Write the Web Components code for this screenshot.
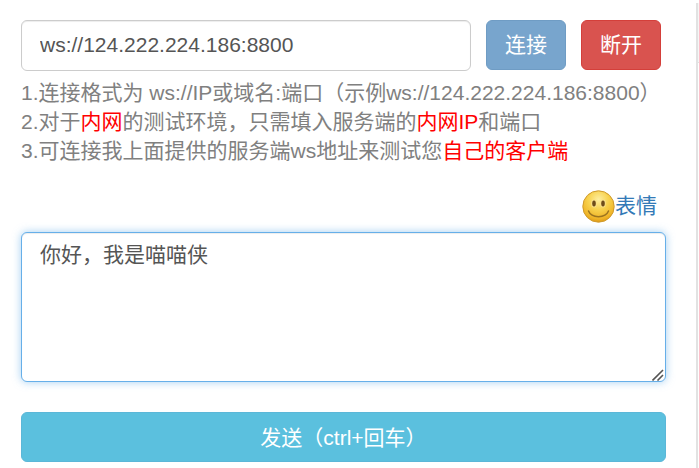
<!DOCTYPE html>
<html lang="zh">
<head>
<meta charset="utf-8">
<style>
  html, body { margin: 0; padding: 0; background: #fff; height: 100%; overflow: hidden; }
  body { font-family: "Liberation Sans", "Noto Sans CJK SC", sans-serif; }
  connect-tips b { font-weight: normal; color: #f00; }
</style>
</head>
<body>
<chat-panel>
  <connect-bar value="ws://124.222.224.186:8800"></connect-bar>
  <connect-tips>
    <div>1.连接格式为 ws://IP或域名:端口（示例ws://124.222.224.186:8800）</div>
    <div>2.对于<b>内网</b>的测试环境，只需填入服务端的<b>内网IP</b>和端口</div>
    <div>3.可连接我上面提供的服务端ws地址来测试您<b>自己的客户端</b></div>
  </connect-tips>
  <emoji-link>表情</emoji-link>
  <message-box value="你好，我是喵喵侠"></message-box>
  <send-button>发送（ctrl+回车）</send-button>
</chat-panel>

<script>
const FONT = '"Liberation Sans", "Noto Sans CJK SC", sans-serif';

class ChatPanel extends HTMLElement {
  constructor() {
    super();
    this.attachShadow({ mode: 'open' }).innerHTML = `
      <style>
        :host {
          display: flex;
          box-sizing: border-box;
          width: 699px;
          height: 468px;
          padding-left: 21px;
        }
        .main { width: 645px; padding-top: 20px; }
        /* edge of the next panel, cut off by the window */
        .rail {
          box-sizing: border-box;
          width: 3px;
          margin: 3px 0 0 30px;
          border-left: 2px solid #e2e2e2;
          background: linear-gradient(#f6f6f6 59px, #e2e2e2 59px, #e2e2e2 60px, #fff 60px);
        }
      </style>
      <div class="main"><slot></slot></div>
      <div class="rail"></div>`;
  }
}

class ConnectBar extends HTMLElement {
  constructor() {
    super();
    this.attachShadow({ mode: 'open' }).innerHTML = `
      <style>
        :host { display: flex; align-items: flex-start; }
        input {
          box-sizing: border-box;
          width: 450px;
          height: 51px;
          padding: 0 18px 1px;
          border: 1px solid #ccc;
          border-radius: 6px;
          font: 21px ${FONT};
          color: #555;
          outline: none;
          box-shadow: inset 0 1px 1px rgba(0,0,0,.075);
        }
        button {
          box-sizing: border-box;
          width: 80px;
          height: 50px;
          margin-left: 15px;
          padding: 0 0 4px;
          border-radius: 6px;
          color: #fff;
          font: 21px ${FONT};
        }
        .on { background: #78a5cd; border: 1px solid #6f9cc4; }
        .off { background: #d9534f; border: 1px solid #d43f3a; }
      </style>
      <input type="text">
      <button class="on">连接</button>
      <button class="off">断开</button>`;
    this.shadowRoot.querySelector('input').setAttribute('value', this.getAttribute('value') || '');
  }
}

class ConnectTips extends HTMLElement {
  constructor() {
    super();
    this.attachShadow({ mode: 'open' }).innerHTML = `
      <style>
        :host {
          display: block;
          margin-top: 7px;
          font-size: 21px;
          line-height: 29px;
          color: #808080;
          white-space: nowrap;
        }
        ::slotted(div) { height: 29px; }
      </style>
      <slot></slot>`;
  }
}

class EmojiLink extends HTMLElement {
  constructor() {
    super();
    this.attachShadow({ mode: 'open' }).innerHTML = `
      <style>
        :host {
          display: flex;
          justify-content: flex-end;
          align-items: center;
          height: 34px;
          margin-top: 24px;
          padding-right: 9px;
          font-size: 21px;
          color: #337ab7;
        }
        svg { width: 33px; height: 33px; }
        span { padding-bottom: 4px; }
      </style>
      <svg viewBox="0 0 33 33" aria-hidden="true">
        <defs>
          <radialGradient id="face" cx="50%" cy="28%" r="72%">
            <stop offset="0" stop-color="#fdeea0"/>
            <stop offset=".45" stop-color="#f8d24e"/>
            <stop offset=".85" stop-color="#efb326"/>
            <stop offset="1" stop-color="#dd9a18"/>
          </radialGradient>
        </defs>
        <circle cx="16.5" cy="16.5" r="15.7" fill="url(#face)" stroke="#cf9a2c"/>
        <ellipse cx="12" cy="13.5" rx="2.8" ry="4" fill="#f9e08a"/>
        <ellipse cx="21" cy="13.5" rx="2.8" ry="4" fill="#f9e08a"/>
        <ellipse cx="12" cy="13.5" rx="1.8" ry="3" fill="#6e4c1a"/>
        <ellipse cx="21" cy="13.5" rx="1.8" ry="3" fill="#6e4c1a"/>
        <path d="M6.5 21c3 7.5 17 7.5 20 0" fill="none" stroke="#9c7420" stroke-width="1.5" stroke-linecap="round"/>
      </svg>
      <span><slot></slot></span>`;
  }
}

class MessageBox extends HTMLElement {
  constructor() {
    super();
    this.attachShadow({ mode: 'open' }).innerHTML = `
      <style>
        :host { display: block; position: relative; margin-top: 9px; }
        textarea {
          display: block;
          box-sizing: border-box;
          width: 645px;
          height: 150px;
          padding: 7px 18px;
          border: 1px solid #66afe9;
          border-radius: 6px;
          font: 21px/1.43 ${FONT};
          color: #555;
          outline: none;
          resize: none;
          box-shadow: inset 0 1px 1px rgba(0,0,0,.075), 0 0 8px rgba(102,175,233,.6);
        }
        svg { position: absolute; right: 2px; bottom: 1px; width: 12px; height: 12px; }
      </style>
      <textarea></textarea>
      <svg viewBox="0 0 12 12" aria-hidden="true">
        <path d="M.5 11.5 11 1M5.5 11.5 11 6" fill="none" stroke="#555" stroke-width="1.6"/>
      </svg>`;
    this.shadowRoot.querySelector('textarea').textContent = this.getAttribute('value') || '';
  }
}

class SendButton extends HTMLElement {
  constructor() {
    super();
    this.attachShadow({ mode: 'open' }).innerHTML = `
      <style>
        :host { display: block; margin-top: 30px; }
        button {
          display: block;
          box-sizing: border-box;
          width: 645px;
          height: 50px;
          padding: 0 0 3px;
          border: 1px solid #5bb7d8;
          border-radius: 6px;
          background: #5bc0de;
          color: #fff;
          font: 21px ${FONT};
        }
      </style>
      <button><slot></slot></button>`;
  }
}

customElements.define('chat-panel', ChatPanel);
customElements.define('connect-bar', ConnectBar);
customElements.define('connect-tips', ConnectTips);
customElements.define('emoji-link', EmojiLink);
customElements.define('message-box', MessageBox);
customElements.define('send-button', SendButton);
</script>
</body>
</html>
